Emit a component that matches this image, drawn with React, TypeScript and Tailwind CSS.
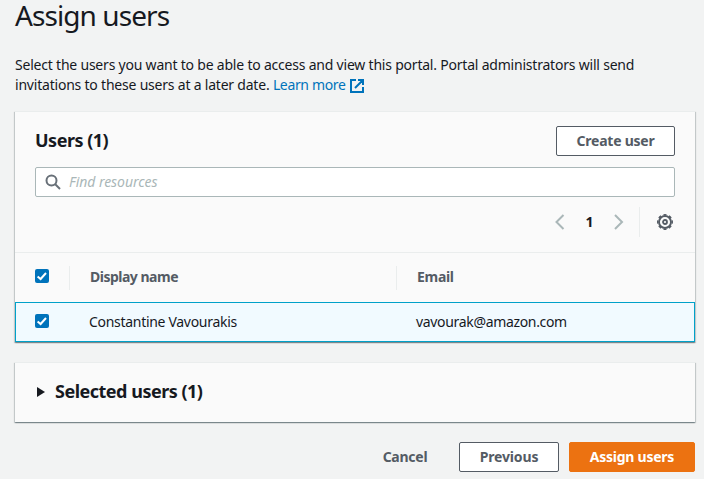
import type { ReactNode } from "react";

const cardShadow =
  "border-t border-[#eaeded] bg-[#fafafa] shadow-[0_1px_1px_0_rgba(0,28,36,0.3),1px_1px_1px_0_rgba(0,28,36,0.15),-1px_1px_1px_0_rgba(0,28,36,0.15)]";

function Checkbox() {
  return (
    <svg className="mb-[3px] block size-[14px]" viewBox="0 0 14 14" fill="none" role="img" aria-label="Selected">
      <rect width="14" height="14" rx="2" fill="#0073bb" />
      <path d="M2.6 7.4 5.6 10 11 4" stroke="#fff" strokeWidth="2" />
    </svg>
  );
}

function Button({ className, children }: { className: string; children: ReactNode }) {
  return (
    <button className={`flex h-[30px] items-center justify-center rounded-[2px] border text-sm leading-5 font-bold whitespace-nowrap ${className}`}>
      {children}
    </button>
  );
}

export default function App() {
  return (
    <main className="h-[479px] bg-[#f2f3f3] pr-[9px] pl-[15px] font-['Noto_Sans',sans-serif] text-sm leading-5 text-[#16191f]">
      <h1 className="h-[33px] text-[28px] leading-[30px] tracking-[-0.92px]">Assign users</h1>
      <p className="mt-[22px] h-10 whitespace-nowrap tracking-[-0.21px]">
        Select the users you want to be able to access and view this portal. Portal administrators will send
        <br />
        invitations to these users at a later date.{" "}
        <a className="tracking-[-0.35px] text-[#0073bb]">
          Learn more
          <svg className="ml-1 inline-block size-[14px] align-[-3px]" viewBox="0 0 14 14" fill="none" stroke="#0073bb" strokeWidth="2">
            <path d="M6 1H1v12h12V8M8 1h5v5M13 1 5 9" />
          </svg>
        </a>
      </p>

      <section className={`mt-4 h-[231px] ${cardShadow}`}>
        <header className="flex h-[44px] items-end justify-between px-5">
          <h2 className="pb-[5px] text-lg leading-[22px] font-bold tracking-[-0.5px]">Users (1)</h2>
          <Button className="w-[119px] border-[#545b64] bg-white tracking-[-0.25px] text-[#545b64]">Create user</Button>
        </header>
        <div className="mx-5 mt-[11px] flex h-[30px] items-center rounded-[2px] border border-[#aab7b8] bg-white pl-[9px]">
          <svg className="size-4" viewBox="0 0 16 16" fill="none" stroke="#687078" strokeWidth="2">
            <circle cx="6.5" cy="6.5" r="5" />
            <path d="m10 10 5 5" />
          </svg>
          <span className="ml-2 tracking-[-0.05px] text-[#aab7b8] italic">Find resources</span>
        </div>
        <div className="mt-[10px] flex h-[30px] items-center justify-end pr-[22px]">
          <svg className="h-4 w-[10px]" viewBox="0 0 10 16" fill="none" stroke="#aab7b8" strokeWidth="2">
            <path d="M8.5 1 1.5 8l7 7" />
          </svg>
          <span className="w-[49px] text-center font-bold">1</span>
          <svg className="h-4 w-[10px]" viewBox="0 0 10 16" fill="none" stroke="#aab7b8" strokeWidth="2">
            <path d="m1 1 7 7-7 7" />
          </svg>
          <div className="mr-[17px] ml-[15px] h-[30px] w-px bg-[#eaeded]" />
          <svg className="size-4" viewBox="0 0 16 16" fill="none" stroke="#545b64">
            <circle cx="8" cy="8" r="6" strokeWidth="1.9" />
            <circle cx="8" cy="8" r="7.3" strokeWidth="1.4" pathLength="16" strokeDasharray="1.1 0.9" strokeDashoffset="0.55" />
            <circle cx="8" cy="8" r="2" strokeWidth="1.8" />
          </svg>
        </div>
        <div className="mt-[15px] flex h-[50px] items-center border-t border-[#eaeded] pl-5 font-bold text-[#545b64]">
          <Checkbox />
          <div className="ml-5 flex h-6 w-[327px] items-center border-l border-[#eaeded] pb-[2px] pl-5 tracking-[-0.5px]">Display name</div>
          <div className="flex h-6 items-center border-l border-[#eaeded] pb-[2px] pl-5 tracking-[-0.3px]">Email</div>
        </div>
        <div className="flex h-10 items-center border border-[#00a1c9] bg-[#f1faff] pl-[19px]">
          <Checkbox />
          <span className="ml-10 w-[327px] tracking-[-0.3px]">Constantine Vavourakis</span>
          <span className="tracking-[-0.33px]">vavourak@amazon.com</span>
        </div>
      </section>

      <section className={`mt-5 flex h-[60px] items-center pb-[2px] pl-[22px] ${cardShadow}`}>
        <svg className="h-[10px] w-2" viewBox="0 0 8 10" fill="#16191f">
          <path d="M0 0 8 5 0 10Z" />
        </svg>
        <h2 className="ml-[10px] pb-px text-lg leading-[22px] font-bold tracking-[-0.5px]">Selected users (1)</h2>
      </section>

      <footer className="mt-5 flex justify-end">
        <Button className="mr-[10px] w-[88px] border-transparent tracking-[-0.25px] text-[#545b64]">Cancel</Button>
        <Button className="mr-[10px] w-[100px] border-[#545b64] bg-white tracking-[-0.15px] text-[#545b64]">Previous</Button>
        <Button className="w-[126px] border-[#ec7211] bg-[#ec7211] tracking-[-0.25px] text-white">Assign users</Button>
      </footer>
    </main>
  );
}
